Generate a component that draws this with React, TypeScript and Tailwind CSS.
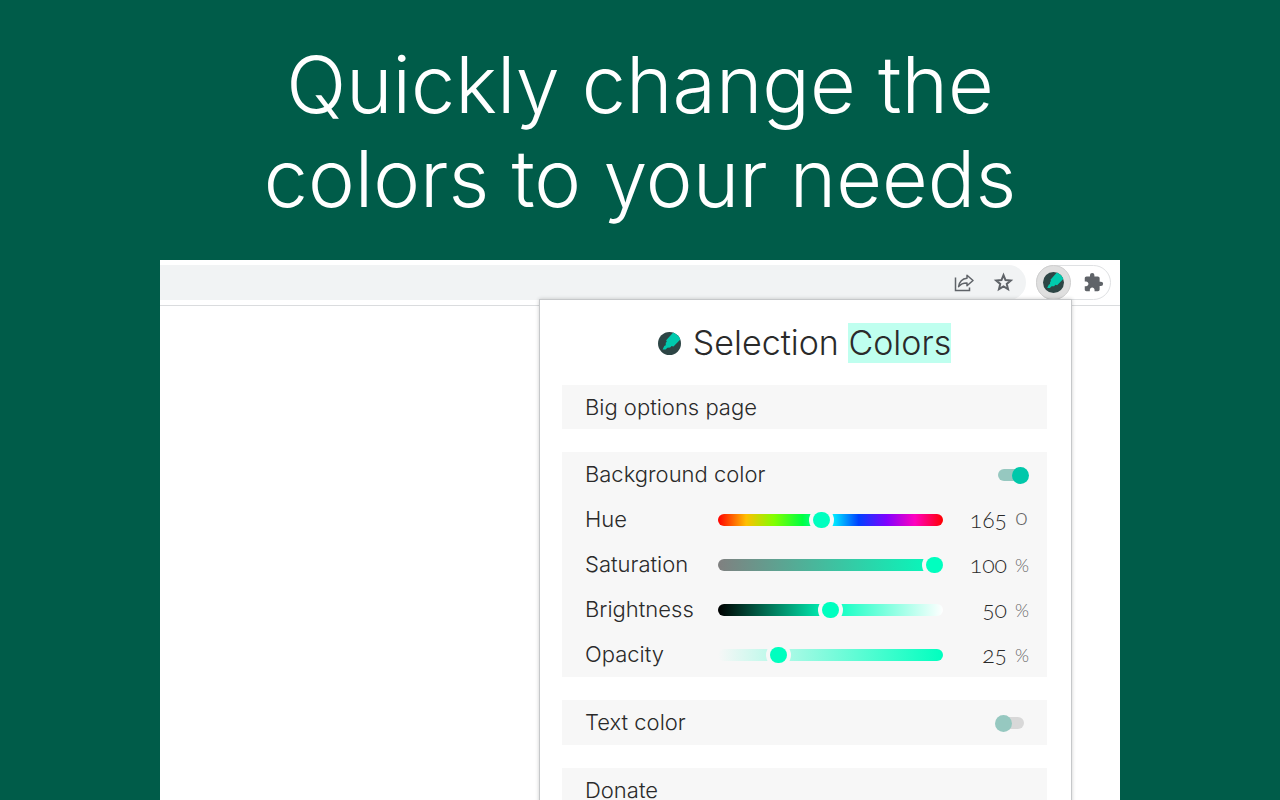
import { useId, useState } from "react";
import { MdExtension } from "react-icons/md";
import { clsx } from "clsx";

const sliders = [
  {
    name: "Hue",
    value: 165,
    max: 360,
    unit: "o",
    unitStyle: "pb-1.5 text-[23px]",
    track:
      "bg-[linear-gradient(to_right,#ff0000,#ffbf00,#80ff00,#00ff40,#00ffff,#0040ff,#8000ff,#ff00bf,#ff0000)]",
  },
  {
    name: "Saturation",
    value: 100,
    max: 100,
    unit: "%",
    unitStyle: "text-lg",
    track: "bg-[linear-gradient(to_right,#808080,#00ffbf)]",
  },
  {
    name: "Brightness",
    value: 50,
    max: 100,
    unit: "%",
    unitStyle: "text-lg",
    track: "bg-[linear-gradient(to_right,#000000,#00ffbf,#ffffff)]",
  },
  {
    name: "Opacity",
    value: 25,
    max: 100,
    unit: "%",
    unitStyle: "text-lg",
    track: "bg-[linear-gradient(to_right,#f7f7f7,#00ffbf)]",
  },
];

function MarkerLogo({ className }: { className?: string }) {
  const clip = useId();

  return (
    <svg viewBox="0 0 22 22" className={className} aria-hidden="true">
      <clipPath id={clip}>
        <circle cx="11" cy="11" r="11" />
      </clipPath>
      <g clipPath={`url(#${clip})`}>
        <rect width="22" height="22" fill="#2d4545" />
        <path
          d="M15 0 L22.5 6 L14.8 13.8 L13 13.4 L11.6 14.8 L9 15 L7.2 16.8 L4.4 16.8 L6 13.4 L7.4 12.6 L7.4 10.4 L8.4 9.4 L7.8 8 Z"
          fill="#00c9ad"
        />
      </g>
    </svg>
  );
}

function ShareIcon() {
  return (
    <svg
      viewBox="0 0 20 18"
      className="h-[18px] w-5"
      fill="none"
      stroke="#5f6368"
      strokeWidth="1.5"
      aria-hidden="true"
    >
      <path d="M1.5 3.5V16.5H15.5V13.6" />
      <path
        d="M13 1.2L19 6.5L13 11.8V8.9C9.4 8.8 6.8 9.8 4.6 12.6C5.3 8.2 8 4.7 13 4.2Z"
        strokeLinejoin="round"
      />
    </svg>
  );
}

function StarIcon() {
  return (
    <svg
      viewBox="0 0 24 24"
      className="size-[23px]"
      fill="none"
      stroke="#5f6368"
      strokeWidth="2.1"
      aria-hidden="true"
    >
      <path d="M12 4.3L14.1 9.4L19.6 9.9L15.4 13.5L16.7 18.9L12 16L7.3 18.9L8.6 13.5L4.4 9.9L9.9 9.4Z" />
    </svg>
  );
}

function Toggle({ id, defaultChecked }: { id: string; defaultChecked?: boolean }) {
  return (
    <input
      id={id}
      type="checkbox"
      defaultChecked={defaultChecked}
      className="relative mr-[23px] h-3 w-[26px] shrink-0 cursor-pointer appearance-none rounded-full bg-[#d8d8d8] before:absolute before:-top-0.5 before:-left-[3px] before:size-[17px] before:rounded-full before:bg-[#96c8c0] checked:bg-[#96c8c0] checked:before:left-[14px] checked:before:bg-[#00c8aa]"
    />
  );
}

function SliderRow({ name, value, max, unit, unitStyle, track }: (typeof sliders)[number]) {
  const [current, setCurrent] = useState(value);

  return (
    <div className="flex h-[45px] items-center">
      <label htmlFor={name} className="w-[133px] shrink-0">
        {name}
      </label>
      <input
        id={name}
        type="range"
        min={0}
        max={max}
        value={current}
        onChange={(e) => setCurrent(Number(e.target.value))}
        className={clsx(
          "h-3 w-[225px] cursor-pointer appearance-none rounded-full [&::-webkit-slider-runnable-track]:h-3 [&::-webkit-slider-thumb]:-mt-0.5 [&::-webkit-slider-thumb]:h-4 [&::-webkit-slider-thumb]:w-[17px] [&::-webkit-slider-thumb]:appearance-none [&::-webkit-slider-thumb]:rounded-full [&::-webkit-slider-thumb]:bg-[#00ffbf] [&::-webkit-slider-thumb]:shadow-[0_0_0_4px_#f7f7f7]",
          track
        )}
      />
      <input
        type="number"
        aria-label={`${name} value`}
        min={0}
        max={max}
        value={current}
        onChange={(e) => setCurrent(Number(e.target.value))}
        className="w-16 appearance-none bg-transparent text-right font-[Lato,sans-serif] text-[23px] oldstyle-nums outline-none [-moz-appearance:textfield] [&::-webkit-inner-spin-button]:appearance-none"
      />
      <span className={clsx("ml-2 font-[Lato,sans-serif] text-[#666666]", unitStyle)}>{unit}</span>
    </div>
  );
}

function Popup() {
  return (
    <div className="absolute top-[39px] right-12 w-[533px] border border-[#c6c8ca] bg-white pt-[23px] pr-6 pl-[22px] text-[22px] font-light text-[#2a2a2a] shadow-[0_0_4px_rgba(0,0,0,0.2)]">
      <header className="mb-[22px] flex items-center justify-center gap-3">
        <MarkerLogo className="size-[23px]" />
        <h2 className="text-[34px] leading-10">
          Selection <span className="inline-block bg-[#bfffef]">Colors</span>
        </h2>
      </header>

      <div className="flex flex-col gap-[23px]">
        <button className="h-11 bg-[#f7f7f7] px-[23px] text-left">Big options page</button>

        <section className="bg-[#f7f7f7] pl-[23px]">
          <div className="flex h-[45px] items-center justify-between">
            <label htmlFor="background">Background color</label>
            <Toggle id="background" defaultChecked />
          </div>
          {sliders.map((slider) => (
            <SliderRow key={slider.name} {...slider} />
          ))}
        </section>

        <section className="flex h-[45px] items-center justify-between bg-[#f7f7f7] pl-[23px]">
          <label htmlFor="text">Text color</label>
          <Toggle id="text" />
        </section>

        <button className="h-11 bg-[#f7f7f7] px-[23px] text-left">Donate</button>
      </div>
    </div>
  );
}

export default function App() {
  return (
    <main className="flex h-screen flex-col overflow-hidden bg-[#005c49] font-[Inter,sans-serif]">
      <h1 className="px-6 pt-[37px] pb-[35px] text-center text-[79px] leading-[94px] font-light text-white">
        Quickly change the
        <br />
        colors to your needs
      </h1>

      {/* Browser window */}
      <div className="relative mx-auto w-3/4 flex-1 bg-white">
        <div className="flex items-center gap-2.5 border-b border-[#dadcde] py-[5px] pr-[9px]">
          <div className="flex h-[35px] flex-1 items-center justify-end gap-[18px] rounded-r-full bg-[#f1f3f4] pr-[11px]">
            <button aria-label="Share">
              <ShareIcon />
            </button>
            <button aria-label="Bookmark">
              <StarIcon />
            </button>
          </div>
          <div className="flex h-[35px] items-center rounded-full border border-[#dfe1e3] pr-1.5">
            <button
              aria-label="Selection Colors"
              className="-ml-px flex size-[35px] items-center justify-center rounded-full border border-[#cfcfcf] bg-[#dfdfdf]"
            >
              <MarkerLogo className="size-[21px]" />
            </button>
            <button aria-label="Extensions" className="ml-3 text-[#5f6368]">
              <MdExtension size={21} />
            </button>
          </div>
        </div>
        <Popup />
      </div>
    </main>
  );
}
